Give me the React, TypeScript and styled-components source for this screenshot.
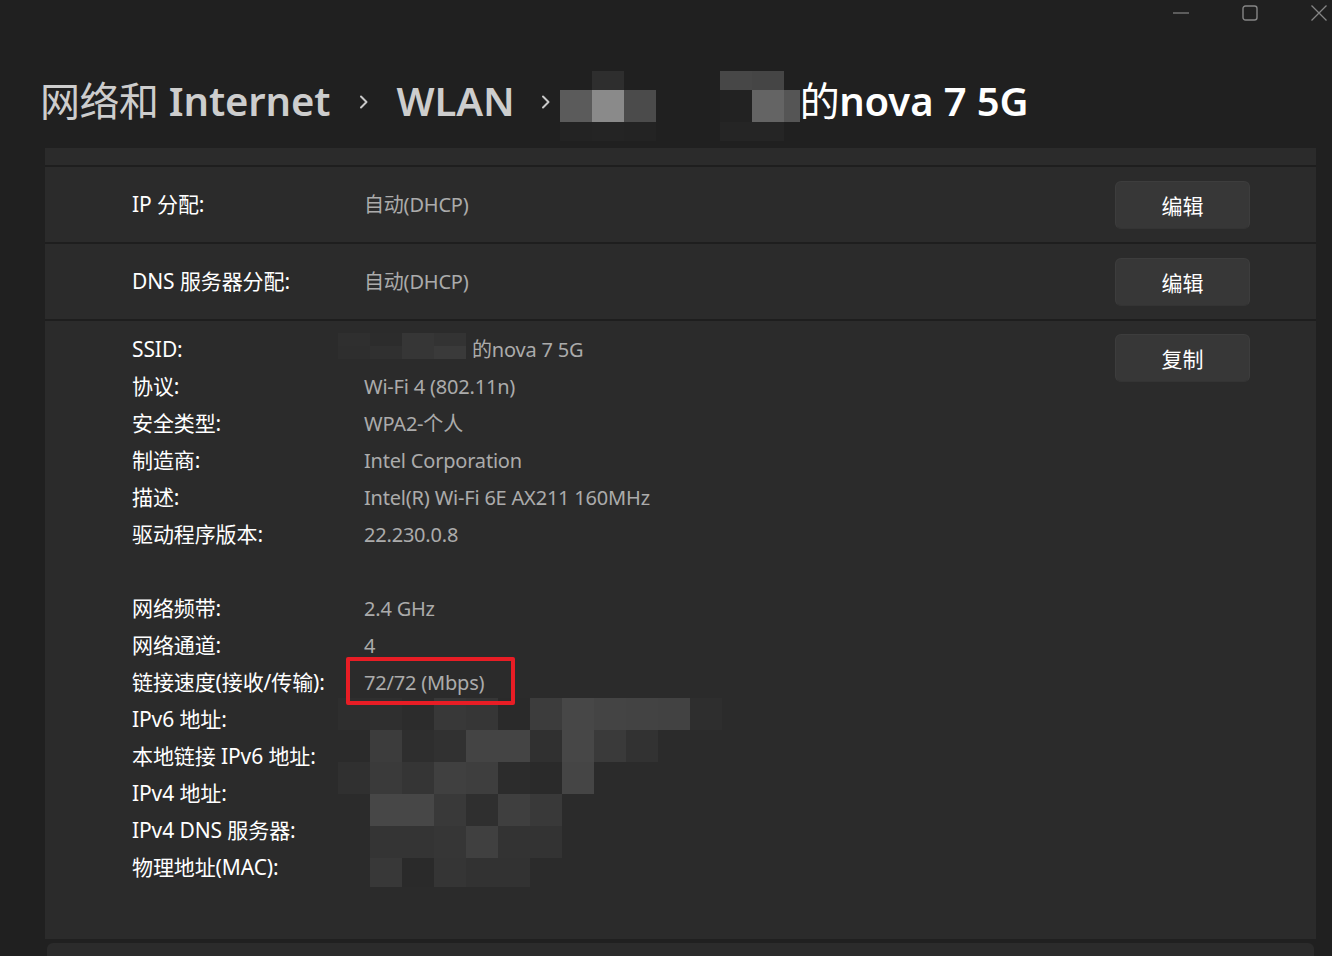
import React from 'react';
import styled, { createGlobalStyle } from 'styled-components';

const GlobalStyle = createGlobalStyle`
  html, body { margin: 0; padding: 0; background: #202020; overflow: hidden; }
  body { font-family: "Noto Sans", "Noto Sans CJK SC", sans-serif; color: #fff; }
  * { box-sizing: border-box; }
`;

const Window = styled.div`
  width: 1332px;
  height: 956px;
  display: flex;
  flex-direction: column;
  background: #202020;
  overflow: hidden;
`;

const TitleBar = styled.div`
  display: flex;
  justify-content: flex-end;
  height: 25px;
  margin-right: -21px;
  flex-shrink: 0;
`;

const Control = styled.div`
  width: 69px;
  height: 25px;
  display: flex;
  align-items: center;
  justify-content: center;
  color: #858585;
`;

const Header = styled.header`
  height: 123px;
  flex-shrink: 0;
  padding: 46px 0 0 40px;
  overflow: hidden;
`;

const Breadcrumb = styled.nav`
  display: flex;
  align-items: flex-start;
  white-space: nowrap;
`;

const Crumb = styled.span<{ $current?: boolean }>`
  margin-top: 3px;
  font-size: 40px;
  line-height: 54px;
  font-weight: 600;
  letter-spacing: -0.1px;
  color: ${(p) => (p.$current ? '#ffffff' : '#cdcdcd')};
`;

const CjkPart = styled.span`
  font-weight: 400;
  letter-spacing: -0.5px;
`;

const Chevron = styled.span<{ $before: number; $after: number }>`
  display: flex;
  margin: 24px ${(p) => p.$after}px 0 ${(p) => p.$before}px;
  color: #c9c9c9;
`;

const MosaicGrid = styled.div<{ $cols: string; $rows: string }>`
  display: grid;
  grid-template-columns: ${(p) => p.$cols};
  grid-template-rows: ${(p) => p.$rows};
  flex-shrink: 0;
`;

const MosaicOverlay = styled.div<{ $left: number; $top: number }>`
  position: absolute;
  left: ${(p) => p.$left}px;
  top: ${(p) => p.$top}px;
  pointer-events: none;
`;

const Cell = styled.span<{ $c: string }>`
  display: block;
  background: ${(p) => p.$c};
`;

const HeaderGap = styled.span<{ $w: number }>`
  width: ${(p) => p.$w}px;
  flex-shrink: 0;
`;

const Content = styled.main`
  flex: 1;
  overflow: hidden;
  padding: 0 16px 0 45px;
`;

const Card = styled.section`
  display: flex;
  flex-direction: column;
  gap: 2px;
  background: #1e1e1e;
  margin-top: -58px;
`;

const SettingRow = styled.div`
  height: 75px;
  display: flex;
  align-items: center;
  padding: 0 66px 0 87px;
  background: #2b2b2b;
`;

const Label = styled.div`
  width: 232px;
  flex-shrink: 0;
  font-size: 21px;
  line-height: 37px;
  letter-spacing: -0.1px;
  color: #ffffff;
  white-space: nowrap;
`;

const Value = styled.div`
  flex: 1;
  position: relative;
  min-height: 37px;
  font-size: 20px;
  line-height: 37px;
  letter-spacing: -0.2px;
  color: #ababab;
  white-space: nowrap;
`;

const ValueText = styled.span<{ $indent?: number }>`
  padding-left: ${(p) => p.$indent ?? 0}px;
`;

const ActionButton = styled.button<{ $offset?: number }>`
  width: 135px;
  height: 48px;
  flex-shrink: 0;
  align-self: ${(p) => (p.$offset !== undefined ? 'flex-start' : 'center')};
  margin-top: ${(p) => p.$offset ?? 0}px;
  border-radius: 6px;
  background: #373737;
  border: 1px solid #3d3d3d;
  border-bottom-color: #343434;
  color: #ffffff;
  font-family: "Noto Sans", "Noto Sans CJK SC", sans-serif;
  font-size: 21px;
  display: flex;
  align-items: center;
  justify-content: center;
  padding: 0;
`;

const Details = styled.div`
  display: flex;
  padding: 10px 66px 53px 87px;
  background: #2b2b2b;
`;

const InfoList = styled.div`
  flex: 1;
  display: flex;
  flex-direction: column;
`;

const InfoLine = styled.div`
  display: flex;
  height: 37px;
  align-items: stretch;
`;

const Highlight = styled.span`
  position: absolute;
  z-index: 2;
  left: -18px;
  top: -7px;
  width: 169px;
  height: 48px;
  border: 4px solid #e81d25;
  border-radius: 2px;
`;

const NextCard = styled.div`
  height: 40px;
  margin: 4px 2px 0;
  background: #2b2b2b;
  border-radius: 6px 6px 0 0;
`;

type MosaicProps = { cols: number[]; rows: number[]; colors: string[][] };

const Mosaic: React.FC<MosaicProps> = ({ cols, rows, colors }) => (
  <MosaicGrid
    $cols={cols.map((c) => `${c}px`).join(' ')}
    $rows={rows.map((r) => `${r}px`).join(' ')}
  >
    {colors.flatMap((row, ri) => row.map((c, ci) => <Cell key={`${ri}-${ci}`} $c={c} />))}
  </MosaicGrid>
);

const ChevronIcon = () => (
  <svg width="10" height="14" viewBox="0 0 10 14" fill="none">
    <path d="M2 1.5 L7.5 7 L2 12.5" stroke="currentColor" strokeWidth="2" strokeLinecap="round" strokeLinejoin="round" />
  </svg>
);

const B = '#2b2b2b';
const H = '#202020';

const crumbMosaicA = [
  [H, '#2e2e2e', H],
  ['#5b5b5b', '#8a8a8a', '#4b4b4b'],
  ['#232323', '#242424', '#232323'],
];
const crumbMosaicB = [
  ['#474747', '#454545', H],
  ['#222222', '#646464', '#555555'],
  ['#252525', '#252525', H],
];

const ssidMosaic = [
  ['#2f2f2f', '#2c2c2c', '#363636', '#333333'],
  ['#2e2e2e', '#303030', '#363636', '#3a3a3a'],
];

const addrMosaic = [
  ['#2e2e2e', '#2f2f2f', '#2c2c2c', '#383838', '#363636', '#2a2a2a', '#3c3c3c', '#474747', '#444444', '#434343', '#424242', '#2e2e2e'],
  [B, '#3c3c3c', '#2e2e2e', '#313131', '#444444', '#444444', '#303030', '#474747', '#3a3a3a', '#323232', B, B],
  ['#303030', '#3a3a3a', '#353535', '#404040', '#3e3e3e', '#2c2c2c', '#2a2a2a', '#454545', B, B, B, B],
  [B, '#474747', '#474747', '#393939', '#2f2f2f', '#3f3f3f', '#393939', B, B, B, B, B],
  [B, '#343434', '#343434', '#363636', '#404040', '#333333', '#333333', B, B, B, B, B],
  [B, '#383838', '#2a2a2a', '#353535', '#323232', '#323232', B, B, B, B, B, B],
];

const firstInfo: [string, string][] = [
  ['协议:', 'Wi-Fi 4 (802.11n)'],
  ['安全类型:', 'WPA2-个人'],
  ['制造商:', 'Intel Corporation'],
  ['描述:', 'Intel(R) Wi-Fi 6E AX211 160MHz'],
  ['驱动程序版本:', '22.230.0.8'],
];

const addrLabels = ['本地链接 IPv6 地址:', 'IPv4 地址:', 'IPv4 DNS 服务器:', '物理地址(MAC):'];

export default function App() {
  return (
    <>
      <GlobalStyle />
      <Window>
        <TitleBar>
          <Control>
            <svg width="16" height="2" viewBox="0 0 16 2">
              <line x1="0" y1="1" x2="16" y2="1" stroke="currentColor" strokeWidth="1.2" />
            </svg>
          </Control>
          <Control>
            <svg width="16" height="16" viewBox="0 0 16 16" fill="none">
              <rect x="1" y="1" width="14" height="14" rx="2.5" stroke="currentColor" strokeWidth="1.4" />
            </svg>
          </Control>
          <Control>
            <svg width="16" height="16" viewBox="0 0 16 16" fill="none">
              <path d="M0.5 0.5 L15.5 15.5 M15.5 0.5 L0.5 15.5" stroke="currentColor" strokeWidth="1.3" />
            </svg>
          </Control>
        </TitleBar>
        <Header>
          <Breadcrumb>
            <Crumb>
              <CjkPart>网络和</CjkPart> Internet
            </Crumb>
            <Chevron $before={29} $after={27}>
              <ChevronIcon />
            </Chevron>
            <Crumb>WLAN</Crumb>
            <Chevron $before={26} $after={9}>
              <ChevronIcon />
            </Chevron>
            <Mosaic cols={[32, 32, 32]} rows={[19, 32, 19]} colors={crumbMosaicA} />
            <HeaderGap $w={64} />
            <Mosaic cols={[32, 32, 16]} rows={[19, 32, 19]} colors={crumbMosaicB} />
            <Crumb $current>
              <CjkPart>的</CjkPart>nova 7 5G
            </Crumb>
          </Breadcrumb>
        </Header>
        <Content>
          <Card>
            <SettingRow />
            <SettingRow>
              <Label>IP 分配:</Label>
              <Value>自动(DHCP)</Value>
              <ActionButton>编辑</ActionButton>
            </SettingRow>
            <SettingRow>
              <Label>DNS 服务器分配:</Label>
              <Value>自动(DHCP)</Value>
              <ActionButton>编辑</ActionButton>
            </SettingRow>
            <Details>
              <InfoList>
                <InfoLine>
                  <Label>SSID:</Label>
                  <Value>
                    <ValueText $indent={108}>的nova 7 5G</ValueText>
                    <MosaicOverlay $left={-26} $top={2}>
                      <Mosaic cols={[32, 32, 32, 32]} rows={[13, 13]} colors={ssidMosaic} />
                    </MosaicOverlay>
                  </Value>
                </InfoLine>
                {firstInfo.map(([l, v]) => (
                  <InfoLine key={l}>
                    <Label>{l}</Label>
                    <Value>{v}</Value>
                  </InfoLine>
                ))}
                <InfoLine />
                <InfoLine>
                  <Label>网络频带:</Label>
                  <Value>2.4 GHz</Value>
                </InfoLine>
                <InfoLine>
                  <Label>网络通道:</Label>
                  <Value>4</Value>
                </InfoLine>
                <InfoLine>
                  <Label>链接速度(接收/传输):</Label>
                  <Value>
                    72/72 (Mbps)
                    <Highlight />
                  </Value>
                </InfoLine>
                <InfoLine>
                  <Label>IPv6 地址:</Label>
                  <Value>
                    <MosaicOverlay $left={-26} $top={-3}>
                      <Mosaic
                        cols={[32, 32, 32, 32, 32, 32, 32, 32, 32, 32, 32, 32]}
                        rows={[32, 32, 32, 32, 32, 29]}
                        colors={addrMosaic}
                      />
                    </MosaicOverlay>
                  </Value>
                </InfoLine>
                {addrLabels.map((l) => (
                  <InfoLine key={l}>
                    <Label>{l}</Label>
                    <Value />
                  </InfoLine>
                ))}
              </InfoList>
              <ActionButton $offset={3}>复制</ActionButton>
            </Details>
          </Card>
          <NextCard />
        </Content>
      </Window>
    </>
  );
}
